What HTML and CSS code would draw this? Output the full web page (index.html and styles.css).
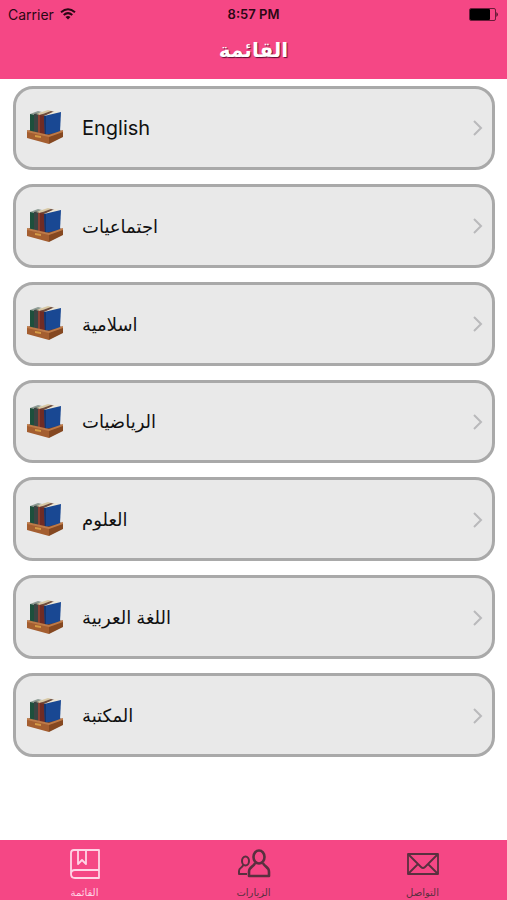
FILE: index.html
```
<!DOCTYPE html>
<html lang="ar">
<head>
    <meta charset="UTF-8">
    <meta name="viewport" content="width=device-width, initial-scale=1.0">
    <title>القائمة</title>
    <link rel="stylesheet" href="styles.css">
</head>
<body>
    <svg class="defs" width="0" height="0" aria-hidden="true">
        <symbol id="books" viewBox="0 0 38 36">
            <path fill="#7a3d1a" d="M1 21 L16 17 L37 21 L23 28 Z"/>
            <path fill="#1d4f3c" d="M4 4 L8 4 L8 23 L4 21 Z"/>
            <path fill="#8f9c94" d="M4 4 L12 1 L16 2 L8 5 Z"/>
            <path fill="#3b4443" d="M8 4 L13 3 L13 24 L8 23 Z"/>
            <path fill="#d8c8a4" d="M10 4 L22 0 L26 1 L14 5 Z"/>
            <path fill="#702c24" d="M12 5 L20 4 L20 25 L12 23 Z"/>
            <path fill="#8d4033" d="M12 5 L14 5 L14 24 L12 23 Z"/>
            <path fill="#6d4a3a" d="M14 5 L25 1 L29 2 L19 6 Z"/>
            <path fill="#eee8d8" d="M18 6 L29 1 L34 2 L23 6 Z"/>
            <path fill="#194893" d="M18 6 L35 2 L34 22 L19 25 Z"/>
            <path fill="#12356f" d="M18 6 L20 6 L20 25 L19 25 Z"/>
            <path fill="#a45e30" d="M1 21 L23 26 L23 34 L1 28 Z"/>
            <path fill="#854821" d="M23 26 L37 21 L37 27 L23 34 Z"/>
            <path fill="#bd7a48" d="M1 20 L23 25 L37 20 L37 22 L23 27 L1 22 Z"/>
            <path fill="#d49a45" d="M9 25 L15 26 L15 28 L9 27 Z"/>
        </symbol>
        <symbol id="chevron" viewBox="0 0 10 16">
            <path d="M1 1 L8 8 L1 15" fill="none" stroke="#b9b9bb" stroke-width="2"/>
        </symbol>
    </svg>

    <header class="header">
        <div class="status">
            <div class="carrier">
                <span>Carrier</span>
                <svg width="16" height="12" viewBox="0 0 16 12" fill="none" stroke="#2b0714" stroke-width="2">
                    <path d="M1 4.2 Q8 -1.8 15 4.2"/>
                    <path d="M3.7 7 Q8 3.2 12.3 7"/>
                    <path d="M8 11.5 L5.5 8.9 Q8 6.9 10.5 8.9 Z" fill="#2b0714" stroke="none"/>
                </svg>
            </div>
            <div class="time">8:57 PM</div>
            <div class="battery">
                <svg width="30" height="13" viewBox="0 0 30 13">
                    <rect x="0.5" y="0.5" width="26" height="12" rx="1.5" fill="none" stroke="#6b1c3a"/>
                    <rect x="1" y="1" width="20" height="11" rx="1" fill="#000"/>
                    <path d="M27.5 4 Q30 6.5 27.5 9 Z" fill="#2b0714"/>
                </svg>
            </div>
        </div>
        <h1 class="title" dir="rtl">القائمة</h1>
    </header>

    <main class="list">
        <a class="card" href="#"><svg class="books"><use href="#books"/></svg><span class="name english">English</span><svg class="chevron"><use href="#chevron"/></svg></a>
        <a class="card" href="#"><svg class="books"><use href="#books"/></svg><span class="name">اجتماعيات</span><svg class="chevron"><use href="#chevron"/></svg></a>
        <a class="card" href="#"><svg class="books"><use href="#books"/></svg><span class="name">اسلامية</span><svg class="chevron"><use href="#chevron"/></svg></a>
        <a class="card" href="#"><svg class="books"><use href="#books"/></svg><span class="name">الرياضيات</span><svg class="chevron"><use href="#chevron"/></svg></a>
        <a class="card" href="#"><svg class="books"><use href="#books"/></svg><span class="name">العلوم</span><svg class="chevron"><use href="#chevron"/></svg></a>
        <a class="card" href="#"><svg class="books"><use href="#books"/></svg><span class="name">اللغة العربية</span><svg class="chevron"><use href="#chevron"/></svg></a>
        <a class="card" href="#"><svg class="books"><use href="#books"/></svg><span class="name">المكتبة</span><svg class="chevron"><use href="#chevron"/></svg></a>
    </main>

    <nav class="tabs">
        <a class="tab active" href="#">
            <svg width="34" height="32" viewBox="0 0 34 32" fill="none" stroke="currentColor" stroke-width="1.8" stroke-linejoin="round">
                <path d="M31 22 V2 H6 Q3 2 3 5 V26 Q3 30 7 30 H31 V22 H7 Q3 22 3 26"/>
                <path d="M10 2 V16 L14 12 L18 16 V2"/>
            </svg>
            <span>القائمة</span>
        </a>
        <a class="tab" href="#">
            <svg width="34" height="32" viewBox="0 0 34 32" fill="none" stroke="currentColor" stroke-width="2.6" stroke-linejoin="round">
                <ellipse cx="22" cy="9" rx="5.5" ry="6.5"/>
                <path d="M18 15 C17 19 12 18 12 24 V28 H32 V24 C32 18 27 19 26 15"/>
                <g stroke-width="2">
                    <ellipse cx="8.500" cy="13" rx="3.500" ry="4.500"/>
                    <path d="M6 17 C6 20 2 19 2 23 V26 H10"/>
                </g>
            </svg>
            <span>الزيارات</span>
        </a>
        <a class="tab" href="#">
            <svg width="34" height="32" viewBox="0 0 34 32" fill="none" stroke="currentColor" stroke-width="1.8" stroke-linejoin="round">
                <rect x="2" y="6" width="30" height="20"/>
                <path d="M2 6 L15 19 Q17 21 19 19 L32 6 M2 26 L12 16 M32 26 L22 16"/>
            </svg>
            <span>التواصل</span>
        </a>
    </nav>
</body>
</html>
```
FILE: styles.css
```
* { box-sizing: border-box; }
body { margin: 0; min-height: 100vh; display: flex; flex-direction: column; background: #fff; font-family: Inter, "DejaVu Sans", sans-serif; }
a { text-decoration: none; color: inherit; }
.defs { position: absolute; }

.header { background: #f54785; padding: 5px 8px 11px; }
.status { display: grid; grid-template-columns: 1fr auto 1fr; align-items: center; height: 18px; font-size: 14px; color: #2b0714; }
.carrier { display: flex; align-items: center; gap: 6px; }
.time { font-weight: 600; font-size: 13px; }
.battery { display: flex; justify-content: flex-end; }
.title { margin: 10px 0 0; font-size: 20px; line-height: 35px; font-weight: bold; color: #fff; text-align: center; text-shadow: 1px 1px 1px rgba(60, 0, 30, 0.8); }

.list { flex: 1; display: grid; grid-auto-rows: 1fr; gap: 14px; padding: 7px 12px 83px 13px; }
.card { display: flex; align-items: center; padding: 1px 9px 0 10px; background: #e9e9e9; border: 3px solid #a9a9a9; border-radius: 20px; color: #111; }
.books { width: 38px; height: 36px; }
.name { flex: 1; margin-left: 18px; font-size: 18px; }
.english { font-size: 20px; }
.chevron { width: 10px; height: 16px; }

.tabs { display: flex; height: 60px; background: #f54785; }
.tab { flex: 1; display: flex; flex-direction: column; align-items: center; padding-top: 8px; color: #59303f; font-size: 10px; line-height: 14px; gap: 5px; }
.active { color: #ffd5e6; }
```
